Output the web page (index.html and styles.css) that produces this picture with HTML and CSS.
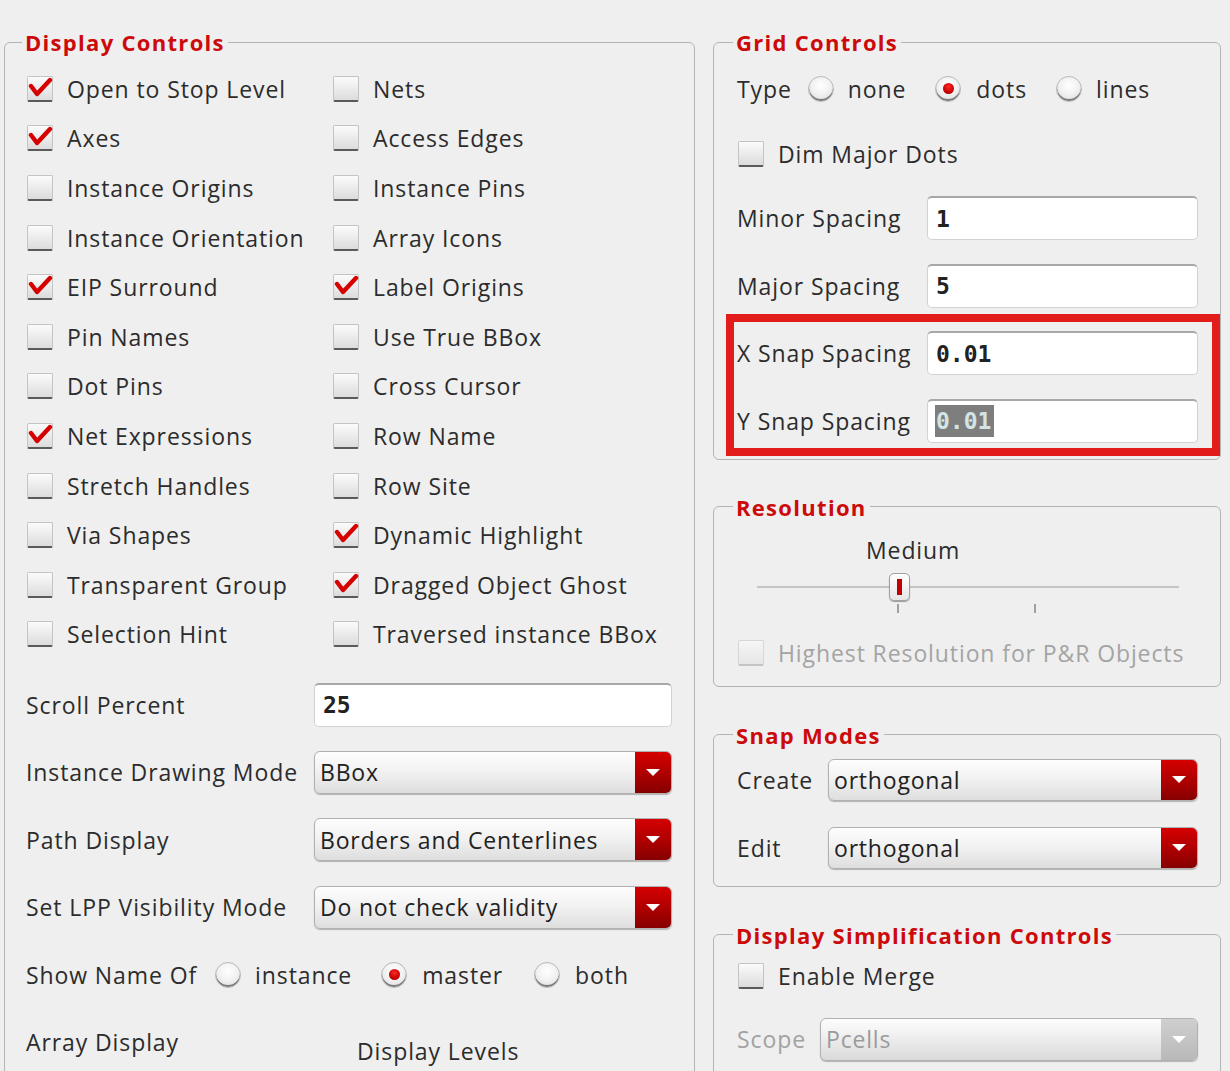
FILE: index.html
```html
<!DOCTYPE html>
<html>
<head>
<meta charset="utf-8">
<title>Display Options</title>
<link rel="stylesheet" href="styles.css">
</head>
<body>
<div class="page">
  <div class="col-left">
    <fieldset class="group group-display">
      <legend>Display Controls</legend>
      <div class="checks">
        <div class="check on"><span class="box"><svg viewBox="0 0 26 26"><path d="M4 10 L10 18 L23 4"/></svg></span>Open to Stop Level</div>
        <div class="check"><span class="box"></span>Nets</div>
        <div class="check on"><span class="box"><svg viewBox="0 0 26 26"><path d="M4 10 L10 18 L23 4"/></svg></span>Axes</div>
        <div class="check"><span class="box"></span>Access Edges</div>
        <div class="check"><span class="box"></span>Instance Origins</div>
        <div class="check"><span class="box"></span>Instance Pins</div>
        <div class="check"><span class="box"></span>Instance Orientation</div>
        <div class="check"><span class="box"></span>Array Icons</div>
        <div class="check on"><span class="box"><svg viewBox="0 0 26 26"><path d="M4 10 L10 18 L23 4"/></svg></span>EIP Surround</div>
        <div class="check on"><span class="box"><svg viewBox="0 0 26 26"><path d="M4 10 L10 18 L23 4"/></svg></span>Label Origins</div>
        <div class="check"><span class="box"></span>Pin Names</div>
        <div class="check"><span class="box"></span>Use True BBox</div>
        <div class="check"><span class="box"></span>Dot Pins</div>
        <div class="check"><span class="box"></span>Cross Cursor</div>
        <div class="check on"><span class="box"><svg viewBox="0 0 26 26"><path d="M4 10 L10 18 L23 4"/></svg></span>Net Expressions</div>
        <div class="check"><span class="box"></span>Row Name</div>
        <div class="check"><span class="box"></span>Stretch Handles</div>
        <div class="check"><span class="box"></span>Row Site</div>
        <div class="check"><span class="box"></span>Via Shapes</div>
        <div class="check on"><span class="box"><svg viewBox="0 0 26 26"><path d="M4 10 L10 18 L23 4"/></svg></span>Dynamic Highlight</div>
        <div class="check"><span class="box"></span>Transparent Group</div>
        <div class="check on"><span class="box"><svg viewBox="0 0 26 26"><path d="M4 10 L10 18 L23 4"/></svg></span>Dragged Object Ghost</div>
        <div class="check"><span class="box"></span>Selection Hint</div>
        <div class="check"><span class="box"></span>Traversed instance BBox</div>
      </div>

      <div class="form">
        <span class="lbl">Scroll Percent</span>
        <div class="input"><span class="val">25</span></div>

        <span class="lbl">Instance Drawing Mode</span>
        <div class="combo"><span class="ctext">BBox</span><span class="cbtn"><i></i></span></div>

        <span class="lbl">Path Display</span>
        <div class="combo"><span class="ctext">Borders and Centerlines</span><span class="cbtn"><i></i></span></div>

        <span class="lbl">Set LPP Visibility Mode</span>
        <div class="combo"><span class="ctext">Do not check validity</span><span class="cbtn"><i></i></span></div>

        <div class="radios wide">
          <span class="lbl">Show Name Of</span>
          <span class="ropt o1"><span class="radio"></span>instance</span>
          <span class="ropt o2"><span class="radio on"></span>master</span>
          <span class="ropt o3"><span class="radio"></span>both</span>
        </div>

        <span class="lbl">Array Display</span>
        <span class="sublbl">Display Levels</span>
      </div>
    </fieldset>
  </div>

  <div class="col-right">
    <fieldset class="group group-grid">
      <legend>Grid Controls</legend>
      <div class="type-row">
        <span class="lbl">Type</span>
        <span class="ropt t1"><span class="radio"></span>none</span>
        <span class="ropt t2"><span class="radio on"></span>dots</span>
        <span class="ropt t3"><span class="radio"></span>lines</span>
      </div>
      <div class="check single"><span class="box"></span>Dim Major Dots</div>
      <div class="spacing">
        <span class="lbl">Minor Spacing</span>
        <div class="input"><span class="val">1</span></div>
        <span class="lbl">Major Spacing</span>
        <div class="input"><span class="val">5</span></div>
      </div>
      <div class="spacing snapxy">
        <span class="lbl">X Snap Spacing</span>
        <div class="input"><span class="val">0.01</span></div>
        <span class="lbl">Y Snap Spacing</span>
        <div class="input"><span class="val sel">0.01</span></div>
        <div class="highlight"></div>
      </div>
    </fieldset>

    <fieldset class="group group-res">
      <legend>Resolution</legend>
      <div class="medium">Medium</div>
      <div class="slider">
        <div class="track"></div>
        <div class="handle"><i></i></div>
      </div>
      <div class="ticks"><span class="tick t1"></span><span class="tick t2"></span></div>
      <div class="check single disabled"><span class="box"></span>Highest Resolution for P&amp;R Objects</div>
    </fieldset>

    <fieldset class="group group-snap">
      <legend>Snap Modes</legend>
      <div class="snapform">
        <span class="lbl">Create</span>
        <div class="combo"><span class="ctext">orthogonal</span><span class="cbtn"><i></i></span></div>
        <span class="lbl">Edit</span>
        <div class="combo"><span class="ctext">orthogonal</span><span class="cbtn"><i></i></span></div>
      </div>
    </fieldset>

    <fieldset class="group group-simp">
      <legend>Display Simplification Controls</legend>
      <div class="check single"><span class="box"></span>Enable Merge</div>
      <div class="scopeform">
        <span class="lbl dim">Scope</span>
        <div class="combo disabled"><span class="ctext">Pcells</span><span class="cbtn"><i></i></span></div>
      </div>
    </fieldset>
  </div>
</div>
</body>
</html>
```

FILE: styles.css
```css
html, body {
  margin: 0;
  height: 1071px;
  overflow: hidden;
}
body {
  background: #efefef;
  font-family: "Open Sans", "DejaVu Sans", sans-serif;
  font-size: 23px;
  letter-spacing: 0.9px;
  color: #2c2c2c;
}
.page {
  display: flex;
  gap: 18px;
  padding: 29px 0 0 4px;
  align-items: flex-start;
}
.col-left { width: 691px; }
.col-right { width: 508px; }

.group {
  margin: 0;
  border: 1px solid #b4b4b4;
  border-radius: 6px;
  min-width: 0;
}
.group legend {
  font-weight: 700;
  font-size: 22px;
  line-height: 26px;
  letter-spacing: 1.3px;
  color: #cc0a0a;
  padding: 0 3px;
  margin-left: -4px;
}

/* Left group */
.group-display {
  padding: 9px 22px 0 21px;
  height: 1100px;
}
.checks {
  display: grid;
  grid-template-columns: 306px 1fr;
  grid-auto-rows: 49.6px;
}
.check {
  display: flex;
  align-items: center;
  gap: 14px;
  white-space: nowrap;
}
.box {
  flex: none;
  position: relative;
  width: 26px;
  height: 26px;
  margin-left: 1px;
  box-sizing: border-box;
  border: 1px solid #c4c4c4;
  border-bottom: 2px solid #5a5a5a;
  border-radius: 2px;
  background: linear-gradient(#fbfbfb, #dcdcdc);
}
.box svg {
  position: absolute;
  left: -1px;
  top: -1px;
  width: 26px;
  height: 26px;
}
.box path {
  fill: none;
  stroke: #d60000;
  stroke-width: 4.4;
  stroke-linecap: round;
  stroke-linejoin: round;
}

.form {
  display: grid;
  grid-template-columns: 288px 358px;
  grid-auto-rows: 67.5px;
  align-items: center;
  margin-top: 12px;
}
.lbl { white-space: nowrap; }
.lbl.dim { color: #a2a2a2; }

.input {
  height: 44px;
  box-sizing: border-box;
  background: #ffffff;
  border: 1px solid #d2d2d2;
  border-top: 2px solid #a8a8a8;
  border-radius: 5px;
  display: flex;
  align-items: center;
  padding-left: 8px;
}
.val {
  font-family: "DejaVu Sans Mono", monospace;
  font-weight: 700;
  font-size: 23px;
  letter-spacing: 0;
  color: #222;
  line-height: 32px;
}
.val.sel {
  background: #7e7e7e;
  color: #d3e4e4;
  padding-right: 3px;
  margin-left: -1px;
  padding-left: 1px;
}

.combo {
  height: 43px;
  box-sizing: border-box;
  border: 1px solid #b0b0b0;
  border-radius: 6px;
  background: linear-gradient(#fdfdfd, #f2f2f2 45%, #dedede);
  box-shadow: 0 1px 1px rgba(0,0,0,0.25);
  display: flex;
  align-items: center;
  overflow: hidden;
}
.ctext {
  flex: 1;
  padding-left: 5px;
  white-space: nowrap;
  color: #222;
  letter-spacing: 0.8px;
}
.cbtn {
  flex: none;
  width: 36px;
  align-self: stretch;
  background: linear-gradient(#d40000, #b00000 50%, #860000);
  display: flex;
  align-items: center;
  justify-content: center;
}
.cbtn i {
  width: 0;
  height: 0;
  border-left: 7px solid transparent;
  border-right: 7px solid transparent;
  border-top: 7px solid #ffffff;
}
.combo.disabled .ctext { color: #9b9b9b; }
.combo.disabled .cbtn { background: linear-gradient(#cfcfcf, #b9b9b9); }
.combo.disabled { background: linear-gradient(#fdfdfd, #eeeeee 45%, #dadada); }

.radios {
  display: flex;
  align-items: center;
}
.radios.wide { grid-column: 1 / span 2; }
.radios .lbl { margin-right: 18px; }
.ropt {
  display: flex;
  align-items: center;
  gap: 15px;
  white-space: nowrap;
}
.ropt.o1 { gap: 14px; margin-right: 29px; }
.ropt.o2 { margin-right: 31px; }
.radio {
  flex: none;
  width: 26px;
  height: 26px;
  box-sizing: border-box;
  border-radius: 50%;
  border: 1px solid #b8b8b8;
  background: radial-gradient(circle at 50% 35%, #ffffff 0, #f2f2f2 45%, #d6d6d6 100%);
  box-shadow: inset 0 -2px 0 #7a7a7a;
  position: relative;
}
.radio.on::after {
  content: "";
  position: absolute;
  left: 7px;
  top: 6px;
  width: 11px;
  height: 11px;
  border-radius: 50%;
  background: radial-gradient(circle at 50% 35%, #ff2a2a, #c80000 60%, #900000);
}
.sublbl {
  padding-left: 43px;
  padding-top: 18px;
}

/* Right groups */
.group-grid { padding: 10px 22px 16px 23px; }
.type-row {
  display: flex;
  align-items: center;
  height: 48px;
}
.type-row .lbl { margin-right: 16px; }
.type-row .ropt.t1 { gap: 14px; margin-right: 29px; }
.type-row .ropt.t2 { gap: 15px; margin-right: 29px; }
.type-row .ropt.t3 { gap: 14px; }
.check.single { height: 48px; margin-top: 17px; }
.spacing {
  display: grid;
  grid-template-columns: 190px 1fr;
  grid-auto-rows: 44px;
  row-gap: 23.5px;
  align-items: center;
  margin-top: 18px;
}
.snapxy {
  position: relative;
  margin-top: 23.5px;
}
.highlight {
  position: absolute;
  left: -11px;
  right: -22px;
  top: -17px;
  bottom: -13px;
  border: 8px solid #e21b1b;
  pointer-events: none;
}

.group-res {
  margin-top: 34px;
  padding: 15px 22px 18px 23px;
}
.medium {
  line-height: 30px;
  margin-left: 129px;
}
.slider {
  position: relative;
  height: 28px;
  margin: 8px 19px 0 20px;
}
.track {
  position: absolute;
  left: 0;
  right: 0;
  top: 13px;
  height: 2px;
  background: #c4c4c4;
}
.handle {
  position: absolute;
  left: 132px;
  top: 0;
  width: 21px;
  height: 28px;
  box-sizing: border-box;
  border: 1px solid #a0a0a0;
  border-radius: 5px;
  background: linear-gradient(#ffffff, #e6e6e6);
  box-shadow: 0 1px 1px rgba(0,0,0,0.35);
  display: flex;
  justify-content: center;
  align-items: center;
}
.handle i {
  width: 5px;
  height: 16px;
  background: #c40000;
  margin-left: -1px;
}
.ticks {
  position: relative;
  height: 9px;
  margin: 3px 19px 0 20px;
}
.tick {
  position: absolute;
  top: 0;
  width: 2px;
  height: 9px;
  background: #a0a0a0;
}
.tick.t1 { left: 140px; }
.tick.t2 { left: 277px; }
.check.single.disabled {
  height: 30px;
  margin-top: 25px;
  color: #a4a4a4;
}
.check.disabled .box {
  border-color: #d6d6d6;
  border-bottom: 2px solid #c4c4c4;
  background: linear-gradient(#f6f6f6, #e6e6e6);
}

.group-snap {
  margin-top: 35px;
  padding: 11px 22px 17px 23px;
}
.snapform {
  display: grid;
  grid-template-columns: 91px 1fr;
  grid-auto-rows: 42px;
  row-gap: 26px;
  align-items: center;
}
.snapform .combo { height: 42px; }

.group-simp {
  margin-top: 35px;
  padding: 13px 22px 0 23px;
  height: 200px;
}
.group-simp .check.single { height: 30px; margin-top: 0; }
.scopeform {
  display: grid;
  grid-template-columns: 83px 1fr;
  align-items: center;
  margin-top: 27px;
}
```
